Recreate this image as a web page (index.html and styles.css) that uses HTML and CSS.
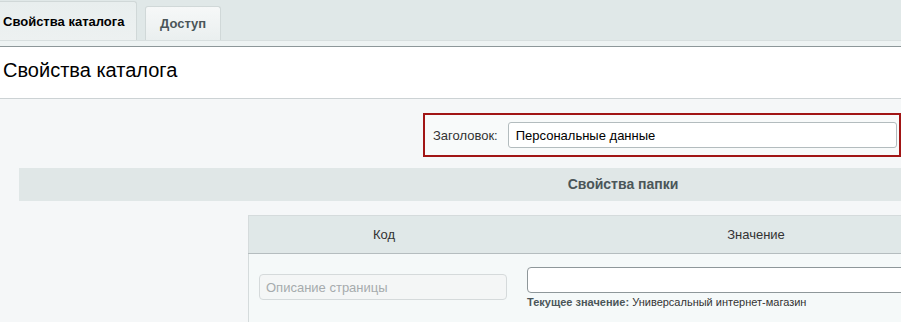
FILE: index.html
```html
<!DOCTYPE html>
<html lang="ru">
<head>
  <meta charset="UTF-8" />
  <title>Свойства каталога</title>
  <link rel="stylesheet" href="styles.css">
</head>
<body>
  <div class="tabs">
    <div class="tab tab-active">Свойства каталога</div>
    <div class="tab">Доступ</div>
  </div>
  <div class="tabs-strip"></div>

  <div class="title-bar">
    <h1>Свойства каталога</h1>
  </div>

  <main class="content">
    <div class="title-field">
      <label for="pageTitle">Заголовок:</label>
      <input type="text" id="pageTitle" value="Персональные данные" />
    </div>

    <div class="section-head">Свойства папки</div>

    <table class="props">
      <thead>
        <tr>
          <th class="col-code">Код</th>
          <th class="col-value">Значение</th>
        </tr>
      </thead>
      <tbody>
        <tr>
          <td class="col-code"><input type="text" class="code-input" value="Описание страницы" disabled /></td>
          <td class="col-value">
            <input type="text" class="value-input" />
            <div class="current"><b>Текущее значение:</b> Универсальный интернет-магазин</div>
          </td>
        </tr>
      </tbody>
    </table>
  </main>
</body>
</html>
```

FILE: styles.css
```css
* {
  box-sizing: border-box;
  margin: 0;
  padding: 0;
}
html, body {
  width: 901px;
  height: 322px;
  overflow: hidden;
}
body {
  font-family: "Liberation Sans", Arial, sans-serif;
  font-size: 13px;
  color: #000;
  background-color: #f5f7f8;
}
.tabs {
  display: flex;
  align-items: flex-end;
  gap: 8px;
  height: 40px;
  background-color: #e0e8e8;
}
.tab {
  height: 34px;
  padding: 0 14px;
  display: flex;
  align-items: center;
  font-weight: 700;
  font-size: 13px;
  color: #4b5659;
  background: linear-gradient(#f6f8f8, #eaefef);
  border: 1px solid #d0d8d8;
  border-bottom: none;
  border-radius: 3px 3px 0 0;
}
.tab-active {
  height: 39px;
  width: 137px;
  padding: 0 3px;
  color: #000;
  border-left: none;
  background: linear-gradient(#e8eeee, #edf1f1);
  border-radius: 0 3px 0 0;
}
.tabs-strip {
  height: 7px;
  background-color: #eef3f3;
  border-top: 1px solid #d8dfdf;
  border-bottom: 1px solid #8d9799;
}
.title-bar {
  height: 52px;
  background-color: #fff;
  border-bottom: 1px solid #ccd2d4;
  padding: 12px 3px 0;
}
h1 {
  font-weight: 400;
  font-size: 20px;
  color: #000;
}
.content {
  padding-top: 14px;
}
.title-field {
  margin-left: 423px;
  width: 478px;
  height: 44px;
  border: 2px solid #a11515;
  display: flex;
  align-items: center;
  padding: 0 2px 0 8px;
  gap: 10px;
  background-color: #f8fafa;
}
.title-field label {
  color: #333;
  font-size: 13px;
}
.title-field input {
  width: 390px;
  height: 26px;
  border: 1px solid #b3bcbe;
  border-radius: 3px;
  padding: 0 7px;
  font-family: inherit;
  font-size: 13px;
  color: #000;
  background: #fff;
}
.section-head {
  margin: 11px 0 0 19px;
  width: 1208px;
  height: 33px;
  line-height: 33px;
  text-align: center;
  font-weight: 700;
  font-size: 14px;
  color: #4b5659;
  background-color: #e0e7e7;
}
.props {
  margin: 14px 0 0 248px;
  width: 746px;
  border-collapse: collapse;
  background-color: #f5f9f9;
  border: 1px solid #d5dbdc;
}
.props th {
  height: 38px;
  font-weight: 400;
  font-size: 13px;
  color: #333;
  background-color: #e0e8e8;
  border-bottom: 1px solid #b5bdbf;
}
.props .col-code {
  width: 272px;
}
.props td {
  vertical-align: top;
  padding: 0 0 30px;
}
.code-input {
  margin: 20px 0 0 10px;
  width: 248px;
  height: 26px;
  border: 1px solid #d5dadb;
  border-radius: 4px;
  padding: 0 6px;
  font-family: inherit;
  font-size: 13px;
  color: #a6abad;
  background-color: #f4f6f6;
}
.value-input {
  margin: 13px 0 0 8px;
  width: 466px;
  height: 26px;
  border: 1px solid #8e979a;
  border-radius: 4px;
  background-color: #fff;
}
.current {
  margin: 3px 0 0 8px;
  font-size: 11px;
  color: #333;
}
.current b {
  color: #4b5659;
}
```
